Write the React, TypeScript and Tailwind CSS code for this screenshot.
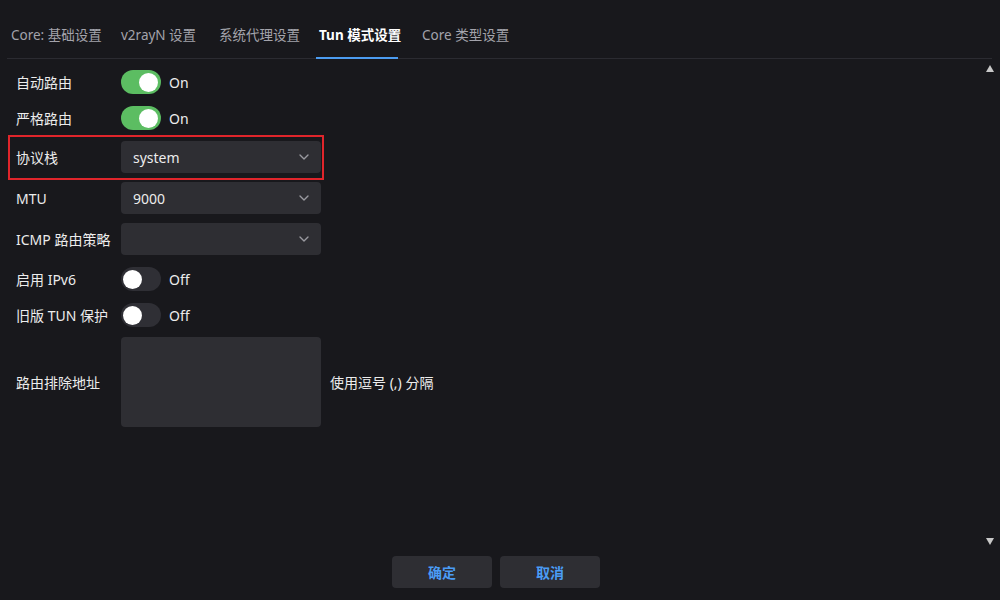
import { ChevronDown } from "lucide-react";

// label, box width, left margin (matches the spacing in the dialog)
const TABS: [string, string, string][] = [
  ["Core: 基础设置", "w-[88px]", "ml-0"],
  ["v2rayN 设置", "w-[75px]", "ml-[22px]"],
  ["系统代理设置", "w-[79px]", "ml-[23px]"],
  ["Tun 模式设置", "w-[82px]", "ml-[21px]"],
  ["Core 类型设置", "w-[86px]", "ml-[21px]"],
];
const ACTIVE = 3;

function Toggle({ on }: { on: boolean }) {
  return (
    <div className="flex items-center gap-2">
      <div
        className={
          on
            ? "flex h-[24px] w-[40px] items-center justify-end rounded-full bg-[#5cbd62] px-[3px]"
            : "flex h-[24px] w-[40px] items-center justify-start rounded-full bg-[#2f2f35] px-[2px]"
        }
      >
        <div className="h-[19px] w-[19px] rounded-full bg-white" />
      </div>
      <span className="text-[14px] text-[#ececec]">{on ? "On" : "Off"}</span>
    </div>
  );
}

function Select({ value }: { value: string }) {
  return (
    <div className="flex h-[32px] w-[200px] items-center justify-between rounded-[4px] bg-[#2e2e33] pl-[12px] pr-[9px]">
      <span className="text-[14px] text-[#ececec]">{value}</span>
      <ChevronDown size={16} strokeWidth={2} className="text-[#9a9aa0]" />
    </div>
  );
}

function Label({ children }: { children: React.ReactNode }) {
  return <div className="w-[105px] shrink-0 text-[14px] text-[#ececec]">{children}</div>;
}

export default function App() {
  return (
    <div
      className="flex h-[600px] w-[1000px] flex-col overflow-hidden bg-[#18181c]"
      style={{ fontFamily: '"Noto Sans", "Noto Sans CJK SC", sans-serif' }}
    >
      {/* tabs */}
      <div className="mx-[7px] mr-[8px] flex h-[59px] items-end border-b border-[#2b2b31]">
        <div className="flex pl-[1px]">
          {TABS.map(([t, w, m], i) => (
            <div
              key={t}
              className={
                i === ACTIVE
                  ? `${w} ${m} -mb-px flex h-[45px] items-center whitespace-nowrap border-b-2 border-[#4c9cf0] px-[3px] pb-[1px] text-[13.5px] font-bold text-white`
                  : `${w} ${m} -mb-px flex h-[45px] items-center whitespace-nowrap border-b-2 border-transparent px-[3px] pb-[1px] text-[13.5px] text-[#a3a3ab]`
              }
            >
              {t}
            </div>
          ))}
        </div>
      </div>

      <div className="flex min-h-0 flex-1">
        <div className="flex flex-1 flex-col pt-[11px]">
          <div className="flex items-center pl-[16px]">
            <Label>自动路由</Label>
            <Toggle on />
          </div>
          <div className="mt-[12px] flex items-center pl-[16px]">
            <Label>严格路由</Label>
            <Toggle on />
          </div>
          <div className="ml-[8px] mt-[5px] flex w-[316px] items-center border-2 border-[#e0252b] pb-[5px] pl-[6px] pr-[1px] pt-[4px]">
            <Label>协议栈</Label>
            <Select value="system" />
          </div>
          <div className="mt-[2px] flex items-center pl-[16px]">
            <Label>MTU</Label>
            <Select value="9000" />
          </div>
          <div className="mt-[9px] flex items-center pl-[16px]">
            <Label>ICMP 路由策略</Label>
            <Select value="" />
          </div>
          <div className="mt-[12px] flex items-center pl-[16px]">
            <Label>启用 IPv6</Label>
            <Toggle on={false} />
          </div>
          <div className="mt-[12px] flex items-center pl-[16px]">
            <Label>旧版 TUN 保护</Label>
            <Toggle on={false} />
          </div>
          <div className="mt-[10px] flex items-center pl-[16px]">
            <Label>路由排除地址</Label>
            <div className="h-[90px] w-[200px] rounded-[4px] bg-[#2e2e33]" />
            <span className="ml-[9px] text-[14px] text-[#ececec]">使用逗号 (,) 分隔</span>
          </div>
        </div>

        {/* scrollbar */}
        <div className="flex w-[20px] flex-col items-center justify-between pb-[5px] pt-[6px]">
          <div className="h-0 w-0 border-x-[4px] border-b-[7px] border-x-transparent border-b-[#c8c8c8]" />
          <div className="h-0 w-0 border-x-[4px] border-t-[7px] border-x-transparent border-t-[#c8c8c8]" />
        </div>
      </div>

      <div className="flex h-[50px] justify-center gap-[8px] pr-[8px] pt-[6px]">
        <button className="h-[32px] w-[100px] rounded-[4px] bg-[#2e2e33] text-[14px] font-bold text-[#4a9cf5]">
          确定
        </button>
        <button className="h-[32px] w-[100px] rounded-[4px] bg-[#2e2e33] text-[14px] font-bold text-[#4a9cf5]">
          取消
        </button>
      </div>
    </div>
  );
}
